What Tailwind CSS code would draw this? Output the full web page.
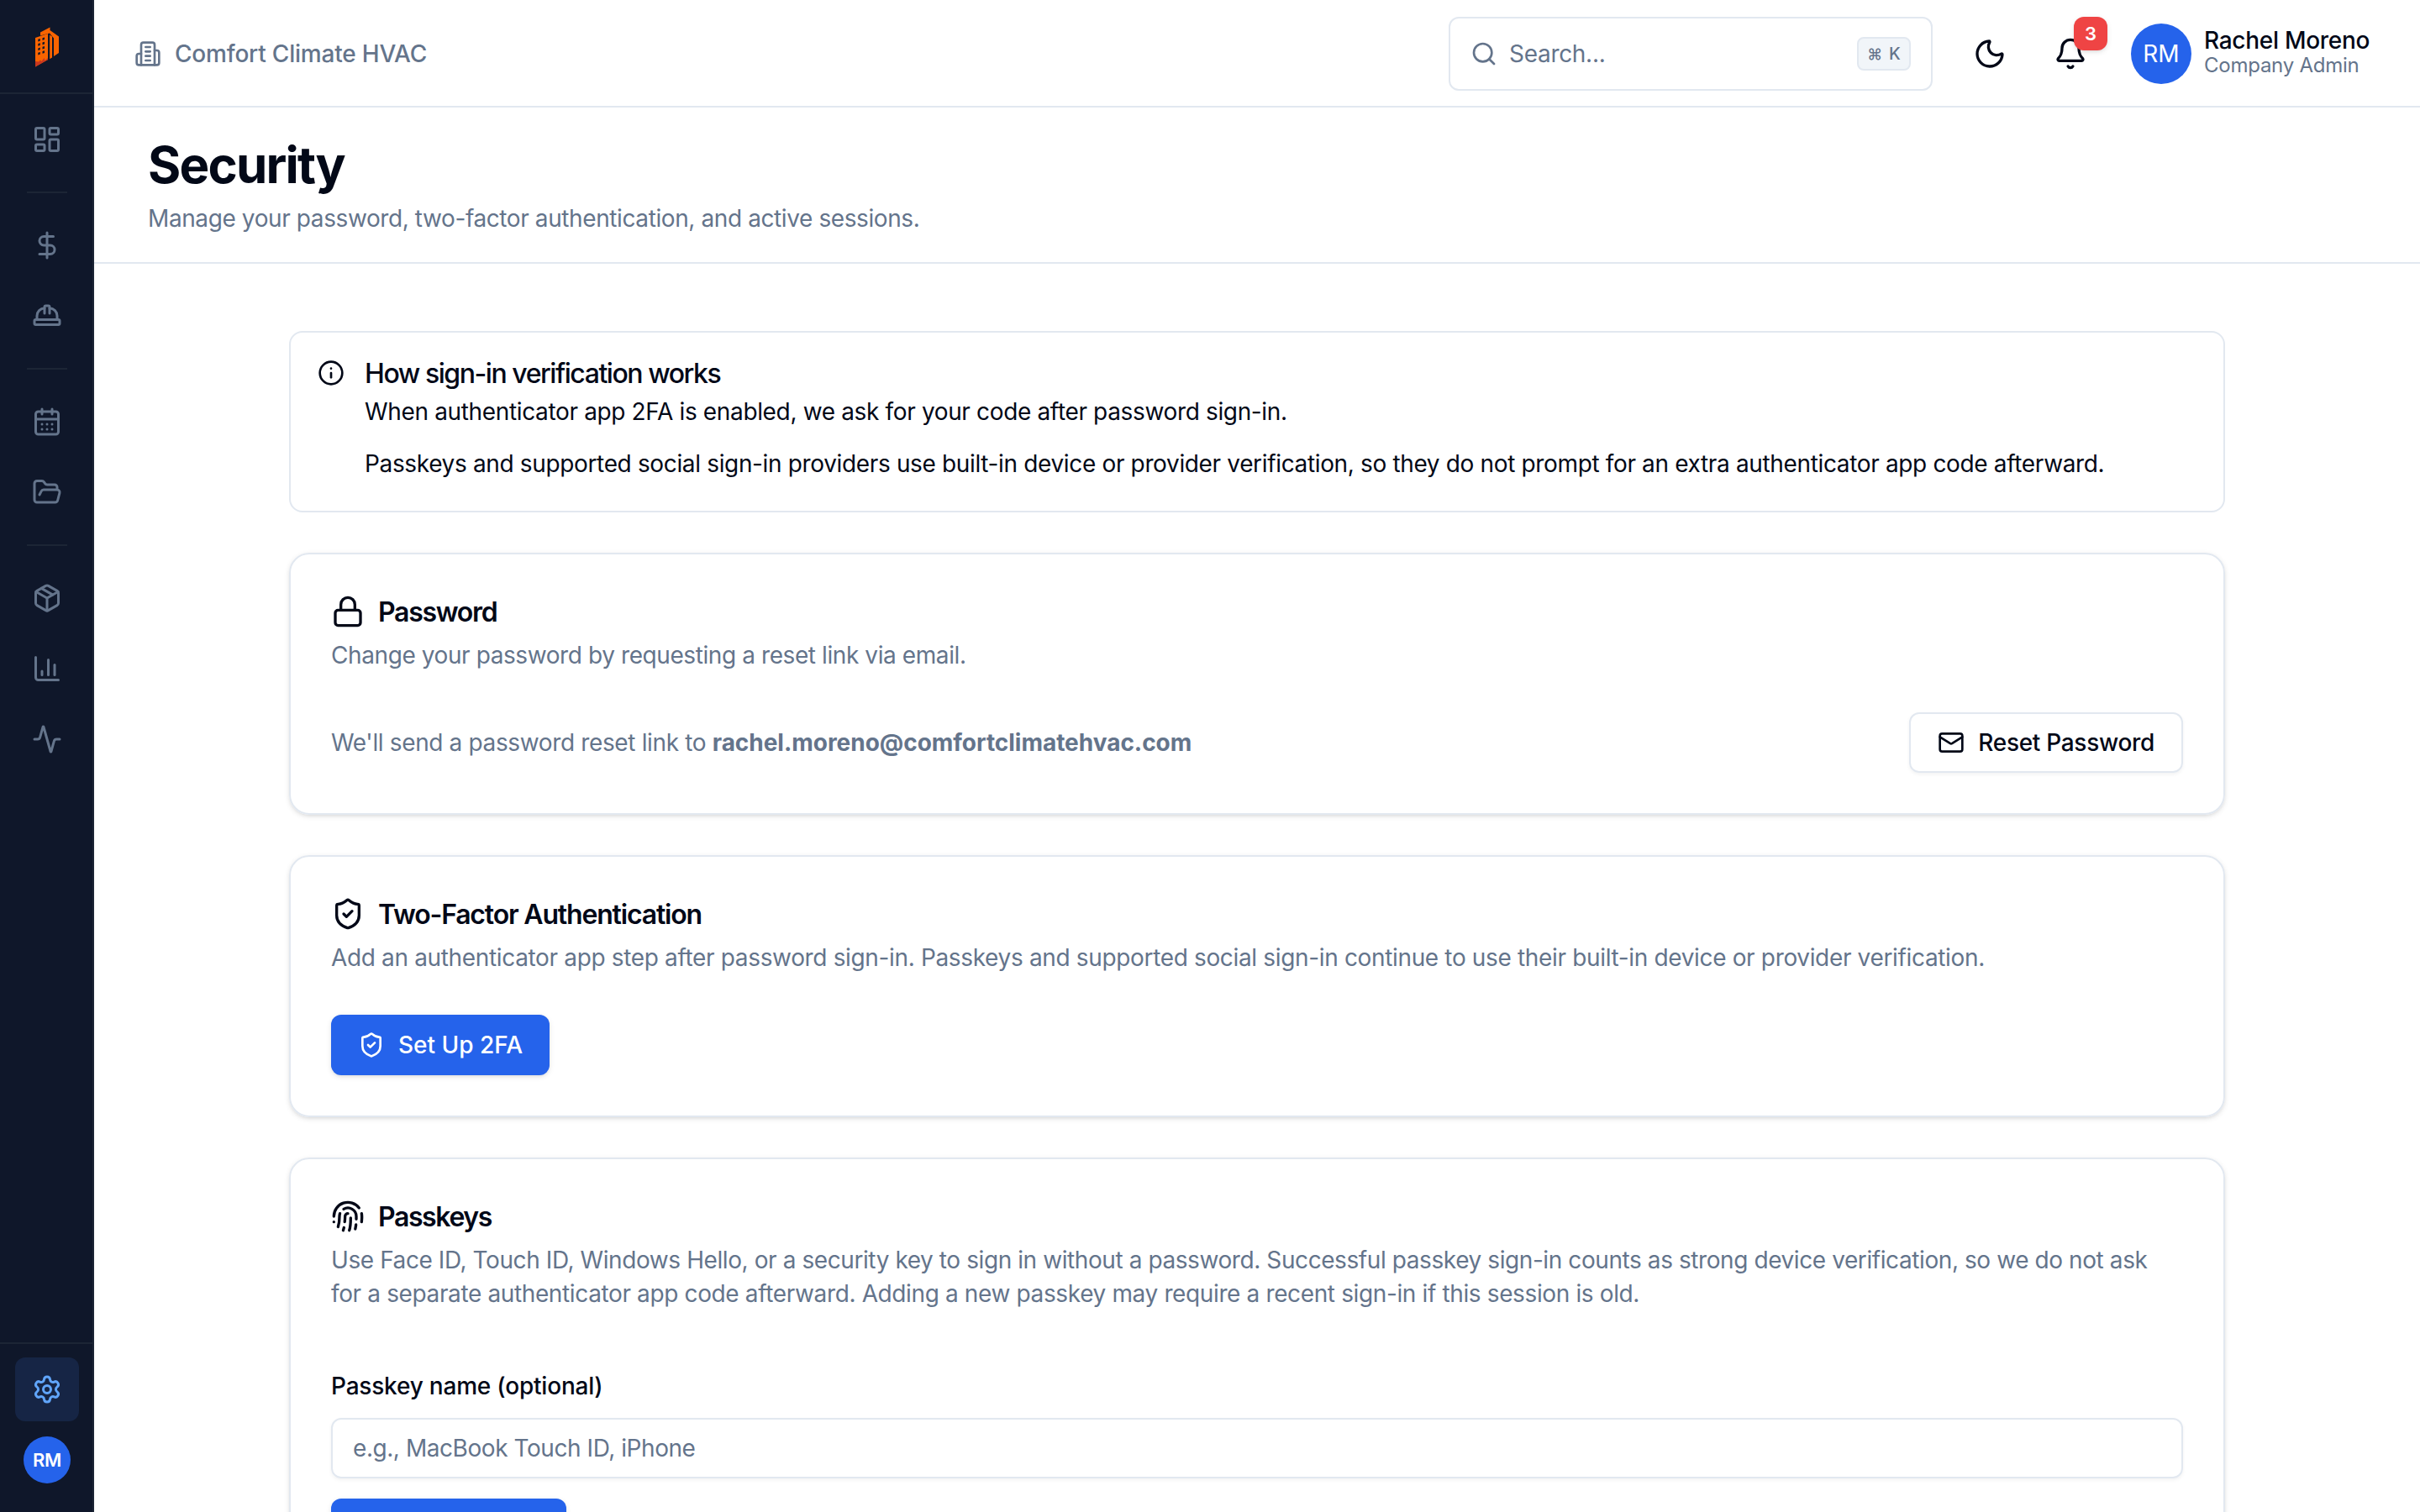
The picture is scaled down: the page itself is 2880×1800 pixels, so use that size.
<!DOCTYPE html>
<html lang="en" class="text-[32px]">
<head>
  <meta charset="UTF-8" />
  <meta name="viewport" content="width=device-width, initial-scale=1.0"/>
  <title>Security - Comfort Climate HVAC</title>
  <script src="https://cdn.jsdelivr.net/npm/@tailwindcss/browser@4"></script>
</head>
<body class="flex h-screen overflow-hidden bg-white font-['Inter',sans-serif] text-[#020817]">

  <!-- Sidebar -->
  <aside class="flex w-14 shrink-0 flex-col border-r-2 border-[#1c2535] bg-[#0f172a] text-[#64748b]">
    <div class="flex h-14 items-center justify-center border-b-2 border-[#1c2535] pt-[2px] pl-[2px]">
      <svg class="h-[48px] w-[28px]" viewBox="0 0 28 48">
        <path fill="#f96400" d="M6 6.500 17.500.5V4L28 11.500V31l-6 4V13.500L17 7.500 6 10.500Z"/>
        <path fill="#f96400" d="M0 13 15 8v31L0 47.500Z"/>
        <path fill="#f96400" d="M17.200 9.500l2.800 2V36.500l-2.800 1.800Z"/>
        <path fill="#c8371f" d="M0 41l4 .5 2-2 1.500 1.500 3-4 1 3 3.500-3v2L0 47.500Z"/>
        <path fill="#0f172a" d="M3.300 14.800l2.500-.8v2.700l-2.500.8Zm5.200-1.600 2.500-.8v2.700l-2.500.8ZM3.300 20.100l2.500-.8v2.700l-2.500.8Zm5.200-1.600 2.500-.8v2.700l-2.500.8ZM3.300 25.400l2.500-.8v2.700l-2.500.8Zm5.200-1.600 2.500-.8v2.700l-2.500.8ZM3.300 30.700l2.500-.8v2.700l-2.500.8Zm5.200-1.600 2.500-.8v2.700l-2.500.8Z"/>
      </svg>
    </div>

    <nav class="flex flex-1 flex-col items-center pt-2 pl-[2px]">
      <a class="flex size-9.5 items-center justify-center">
        <svg class="size-4.5" viewBox="0 0 24 24" fill="none" stroke="currentColor" stroke-width="2" stroke-linecap="round" stroke-linejoin="round"><rect width="7" height="9" x="3" y="3" rx="1"/><rect width="7" height="5" x="14" y="3" rx="1"/><rect width="7" height="9" x="14" y="12" rx="1"/><rect width="7" height="5" x="3" y="16" rx="1"/></svg>
      </a>
      <div class="my-3 h-[2px] w-6 bg-[#1c2535]"></div>
      <div class="flex flex-col gap-1">
        <a class="flex size-9.5 items-center justify-center">
          <svg class="size-4.5" viewBox="0 0 24 24" fill="none" stroke="currentColor" stroke-width="2" stroke-linecap="round" stroke-linejoin="round"><path d="M12 2v20"/><path d="M17 5H9.500a3.500 3.500 0 0 0 0 7h5a3.500 3.500 0 0 1 0 7H6"/></svg>
        </a>
        <a class="flex size-9.5 items-center justify-center">
          <svg class="size-4.5" viewBox="0 0 24 24" fill="none" stroke="currentColor" stroke-width="2" stroke-linecap="round" stroke-linejoin="round"><path d="M10 10V5a1 1 0 0 1 1-1h2a1 1 0 0 1 1 1v5"/><path d="M14 6a6 6 0 0 1 6 6v3"/><path d="M4 15v-3a6 6 0 0 1 6-6"/><rect x="2" y="15" width="20" height="4" rx="1"/></svg>
        </a>
      </div>
      <div class="my-3 h-[2px] w-6 bg-[#1c2535]"></div>
      <div class="flex flex-col gap-1">
        <a class="flex size-9.5 items-center justify-center">
          <svg class="size-4.5" viewBox="0 0 24 24" fill="none" stroke="currentColor" stroke-width="2" stroke-linecap="round" stroke-linejoin="round"><path d="M8 2v4"/><path d="M16 2v4"/><rect width="18" height="18" x="3" y="4" rx="2"/><path d="M3 10h18"/><path d="M8 14h.01"/><path d="M12 14h.01"/><path d="M16 14h.01"/><path d="M8 18h.01"/><path d="M12 18h.01"/><path d="M16 18h.01"/></svg>
        </a>
        <a class="flex size-9.5 items-center justify-center">
          <svg class="size-4.5" viewBox="0 0 24 24" fill="none" stroke="currentColor" stroke-width="2" stroke-linecap="round" stroke-linejoin="round"><path d="m6 14 1.500-2.900A2 2 0 0 1 9.240 10H20a2 2 0 0 1 1.940 2.500l-1.540 6a2 2 0 0 1-1.950 1.500H4a2 2 0 0 1-2-2V5a2 2 0 0 1 2-2h3.900a2 2 0 0 1 1.690.9l.81 1.200a2 2 0 0 0 1.670.9H18a2 2 0 0 1 2 2v2"/></svg>
        </a>
      </div>
      <div class="my-3 h-[2px] w-6 bg-[#1c2535]"></div>
      <div class="flex flex-col gap-1">
        <a class="flex size-9.5 items-center justify-center">
          <svg class="size-4.5" viewBox="0 0 24 24" fill="none" stroke="currentColor" stroke-width="2" stroke-linecap="round" stroke-linejoin="round"><path d="M11 21.730a2 2 0 0 0 2 0l7-4A2 2 0 0 0 21 16V8a2 2 0 0 0-1-1.730l-7-4a2 2 0 0 0-2 0l-7 4A2 2 0 0 0 3 8v8a2 2 0 0 0 1 1.730z"/><path d="M12 22V12"/><path d="M3.290 7 12 12l8.710-5"/><path d="m7.500 4.270 9 5.150"/></svg>
        </a>
        <a class="flex size-9.5 items-center justify-center">
          <svg class="size-4.5" viewBox="0 0 24 24" fill="none" stroke="currentColor" stroke-width="2" stroke-linecap="round" stroke-linejoin="round"><path d="M3 3v16a2 2 0 0 0 2 2h16"/><path d="M18 17V9"/><path d="M13 17V5"/><path d="M8 17v-3"/></svg>
        </a>
        <a class="flex size-9.5 items-center justify-center">
          <svg class="size-4.5" viewBox="0 0 24 24" fill="none" stroke="currentColor" stroke-width="2" stroke-linecap="round" stroke-linejoin="round"><path d="M22 12h-2.480a2 2 0 0 0-1.930 1.460l-2.350 8.360a.25.25 0 0 1-.48 0L9.240 2.180a.25.25 0 0 0-.48 0l-2.350 8.360A2 2 0 0 1 4.490 12H2"/></svg>
        </a>
      </div>
    </nav>

    <div class="flex flex-col items-center gap-1 border-t-2 border-[#1c2535] pt-2 pb-3 pl-[2px]">
      <a class="flex size-9.5 items-center justify-center rounded-md bg-[#162545] text-[#60a5fa]">
        <svg class="size-4.5" viewBox="0 0 24 24" fill="none" stroke="currentColor" stroke-width="2" stroke-linecap="round" stroke-linejoin="round"><path d="M9.671 4.136a2.340 2.340 0 0 1 4.659 0 2.340 2.340 0 0 0 3.319 1.915 2.340 2.340 0 0 1 2.330 4.033 2.340 2.340 0 0 0 0 3.831 2.340 2.340 0 0 1-2.330 4.033 2.340 2.340 0 0 0-3.319 1.915 2.340 2.340 0 0 1-4.659 0 2.340 2.340 0 0 0-3.320-1.915 2.340 2.340 0 0 1-2.330-4.033 2.340 2.340 0 0 0 0-3.831A2.340 2.340 0 0 1 6.350 6.051a2.340 2.340 0 0 0 3.319-1.915"/><circle cx="12" cy="12" r="3"/></svg>
      </a>
      <div class="flex size-9.5 items-center justify-center">
        <div class="flex size-7 items-center justify-center rounded-full bg-[#2563eb] text-[22px] leading-none font-semibold tracking-[-0.3px] text-white">RM</div>
      </div>
    </div>
  </aside>

  <div class="flex min-w-0 flex-1 flex-col">

    <!-- Top bar -->
    <header class="flex h-16 shrink-0 items-center border-b-2 border-[#e2e8f0] px-6 pt-[2px]">
      <div class="flex items-center gap-2 text-[#64748b]">
        <svg class="size-4" viewBox="0 0 24 24" fill="none" stroke="currentColor" stroke-width="2" stroke-linecap="round" stroke-linejoin="round"><path d="M6 22V4a2 2 0 0 1 2-2h8a2 2 0 0 1 2 2v18Z"/><path d="M6 12H4a2 2 0 0 0-2 2v6a2 2 0 0 0 2 2h2"/><path d="M18 9h2a2 2 0 0 1 2 2v9a2 2 0 0 1-2 2h-2"/><path d="M10 6h4"/><path d="M10 10h4"/><path d="M10 14h4"/><path d="M10 18h4"/></svg>
        <span class="text-sm font-medium tracking-[-0.2px]">Comfort Climate HVAC</span>
      </div>

      <div class="ml-auto flex h-11 w-72 items-center gap-[14px] rounded-md border-2 border-[#e2e8f0] px-3 text-[#64748b]">
        <svg class="size-4" viewBox="0 0 24 24" fill="none" stroke="currentColor" stroke-width="2" stroke-linecap="round" stroke-linejoin="round"><path d="m21 21-4.340-4.340"/><circle cx="11" cy="11" r="8"/></svg>
        <span class="text-sm tracking-[-0.3px]">Search...</span>
        <kbd class="ml-auto flex h-5 w-8 items-center justify-center gap-1 rounded-[8px] border-2 border-[#e2e8f0] bg-[#f1f5f9] font-['Inter',sans-serif] text-[20px] font-medium"><span class="text-[18px]">⌘</span>K</kbd>
      </div>

      <button class="ml-4 flex size-9 items-center justify-center">
        <svg class="size-5" viewBox="0 0 24 24" fill="none" stroke="currentColor" stroke-width="2" stroke-linecap="round" stroke-linejoin="round"><path d="M20.985 12.486a9 9 0 1 1-9.473-9.472c.405-.022.617.46.402.803a6 6 0 0 0 8.268 8.268c.344-.215.825-.004.803.401"/></svg>
      </button>
      <button class="relative ml-3 flex size-9 items-center justify-center">
        <svg class="size-5" viewBox="0 0 24 24" fill="none" stroke="currentColor" stroke-width="2" stroke-linecap="round" stroke-linejoin="round"><path d="M10.268 21a2 2 0 0 0 3.464 0"/><path d="M3.262 15.326A1 1 0 0 0 4 17h16a1 1 0 0 0 .74-1.673C19.410 13.956 18 12.499 18 8A6 6 0 0 0 6 8c0 4.499-1.411 5.956-2.738 7.326"/></svg>
        <span class="absolute -top-1 -right-1 flex size-5 items-center justify-center rounded-md bg-[#ef4444] text-[22px] leading-none font-semibold text-white shadow-[0_2px_6px_rgb(0_0_0/0.1),0_2px_4px_-2px_rgb(0_0_0/0.1)]">3</span>
      </button>
      <div class="ml-3.5 flex items-center gap-[15px] px-1">
        <div class="flex size-9 items-center justify-center rounded-full bg-[#2563eb] text-sm text-white">RM</div>
        <div class="flex w-[201px] flex-col gap-0.5 pb-[4px] whitespace-nowrap">
          <span class="text-sm leading-none font-medium tracking-[-0.28px]">Rachel Moreno</span>
          <span class="text-xs leading-none tracking-[-0.25px] text-[#64748b]">Company Admin</span>
        </div>
      </div>
    </header>

    <!-- Page title -->
    <div class="border-b-2 border-[#e2e8f0] px-8 py-4">
      <h1 class="text-3xl font-bold tracking-[-1.8px]">Security</h1>
      <p class="mt-1 text-sm tracking-[-0.4px] text-[#64748b]">Manage your password, two-factor authentication, and active sessions.</p>
    </div>

    <main class="min-h-0 flex-1 overflow-hidden pt-10">
      <div class="mx-auto flex w-full max-w-6xl flex-col gap-6">

        <!-- Info alert -->
        <div class="flex h-[216px] gap-3 rounded-lg border-2 border-[#e2e8f0] p-4">
          <svg class="size-4 shrink-0" viewBox="0 0 24 24" fill="none" stroke="currentColor" stroke-width="2" stroke-linecap="round" stroke-linejoin="round"><circle cx="12" cy="12" r="10"/><path d="M12 16v-4"/><path d="M12 8h.01"/></svg>
          <div>
            <h5 class="mb-[7px] pt-[1px] text-base leading-none font-medium tracking-[-1.45px]">How sign-in verification works</h5>
            <div class="space-y-2 text-sm leading-relaxed tracking-[-0.35px]">
              <p>When authenticator app 2FA is enabled, we ask for your code after password sign-in.</p>
              <p>Passkeys and supported social sign-in providers use built-in device or provider verification, so they do not prompt for an extra authenticator app code afterward.</p>
            </div>
          </div>
        </div>

        <!-- Password -->
        <section class="rounded-xl border-2 border-[#e2e8f0] p-6 shadow-[0_2px_6px_rgb(0_0_0/0.1),0_2px_4px_-2px_rgb(0_0_0/0.1)]">
          <h2 class="flex h-5 items-center gap-2 text-base font-semibold tracking-[-1.3px]">
            <svg class="size-5" viewBox="0 0 24 24" fill="none" stroke="currentColor" stroke-width="2" stroke-linecap="round" stroke-linejoin="round"><rect width="18" height="11" x="3" y="11" rx="2" ry="2"/><path d="M7 11V7a5 5 0 0 1 10 0v4"/></svg>
            <span class="pt-[2px]">Password</span>
          </h2>
          <p class="mt-1.5 text-sm tracking-[-0.41px] text-[#64748b]">Change your password by requesting a reset link via email.</p>
          <div class="mt-6 flex items-center justify-between">
            <p class="text-sm tracking-[-0.36px] text-[#64748b]">We'll send a password reset link to <strong class="font-bold tracking-[-0.03px]">rachel.moreno@comfortclimatehvac.com</strong></p>
            <button class="flex h-9 items-center gap-2 rounded-md border-2 border-[#e2e8f0] px-4 text-sm font-medium tracking-[-0.3px] shadow-[0_2px_4px_rgb(0_0_0/0.05)]">
              <svg class="size-4" viewBox="0 0 24 24" fill="none" stroke="currentColor" stroke-width="2" stroke-linecap="round" stroke-linejoin="round"><path d="m22 7-8.991 5.727a2 2 0 0 1-2.009 0L2 7"/><rect x="2" y="4" width="20" height="16" rx="2"/></svg>
              Reset Password
            </button>
          </div>
        </section>

        <!-- Two-factor -->
        <section class="rounded-xl border-2 border-[#e2e8f0] p-6 shadow-[0_2px_6px_rgb(0_0_0/0.1),0_2px_4px_-2px_rgb(0_0_0/0.1)]">
          <h2 class="flex h-5 items-center gap-2 text-base font-semibold tracking-[-1.18px]">
            <svg class="size-5" viewBox="0 0 24 24" fill="none" stroke="currentColor" stroke-width="2" stroke-linecap="round" stroke-linejoin="round"><path d="M20 13c0 5-3.500 7.500-7.660 8.950a1 1 0 0 1-.67-.01C7.500 20.500 4 18 4 13V6a1 1 0 0 1 1-1c2 0 4.500-1.200 6.240-2.720a1.170 1.170 0 0 1 1.520 0C14.510 3.810 17 5 19 5a1 1 0 0 1 1 1z"/><path d="m9 12 2 2 4-4"/></svg>
            <span class="pt-[2px]">Two-Factor Authentication</span>
          </h2>
          <p class="mt-1.5 text-sm tracking-[-0.345px] text-[#64748b]">Add an authenticator app step after password sign-in. Passkeys and supported social sign-in continue to use their built-in device or provider verification.</p>
          <button class="mt-6 flex h-9 items-center gap-2 rounded-md bg-[#2563eb] px-4 text-sm font-medium text-white shadow-[0_2px_6px_rgb(0_0_0/0.1),0_2px_4px_-2px_rgb(0_0_0/0.1)]">
            <svg class="size-4" viewBox="0 0 24 24" fill="none" stroke="currentColor" stroke-width="2" stroke-linecap="round" stroke-linejoin="round"><path d="M20 13c0 5-3.500 7.500-7.660 8.950a1 1 0 0 1-.67-.01C7.500 20.500 4 18 4 13V6a1 1 0 0 1 1-1c2 0 4.500-1.200 6.240-2.720a1.170 1.170 0 0 1 1.520 0C14.510 3.810 17 5 19 5a1 1 0 0 1 1 1z"/><path d="m9 12 2 2 4-4"/></svg>
            Set Up 2FA
          </button>
        </section>

        <!-- Passkeys -->
        <section class="h-96 rounded-xl border-2 border-[#e2e8f0] p-6 shadow-[0_2px_6px_rgb(0_0_0/0.1),0_2px_4px_-2px_rgb(0_0_0/0.1)]">
          <h2 class="flex h-5 items-center gap-2 text-base font-semibold tracking-[-1.4px]">
            <svg class="size-5" viewBox="0 0 24 24" fill="none" stroke="currentColor" stroke-width="2" stroke-linecap="round" stroke-linejoin="round"><path d="M12 10a2 2 0 0 0-2 2c0 1.020-.1 2.510-.26 4"/><path d="M14 13.120c0 2.380 0 6.380-1 8.880"/><path d="M17.290 21.020c.12-.6.430-2.300.5-3.020"/><path d="M2 12a10 10 0 0 1 18-6"/><path d="M2 16h.01"/><path d="M21.800 16c.2-2 .131-5.354 0-6"/><path d="M5 19.500C5.500 18 6 15 6 12a6 6 0 0 1 .34-2"/><path d="M8.650 22c.21-.66.450-1.320.570-2"/><path d="M9 6.800a6 6 0 0 1 9 5.200v2"/></svg>
            <span class="pt-[2px]">Passkeys</span>
          </h2>
          <p class="mt-1.5 text-sm tracking-[-0.37px] text-[#64748b]"><span class="tracking-[-0.415px]">Use Face ID, Touch ID, Windows Hello, or a security key to sign in without a password. Successful passkey sign-in counts as strong device verification, so we do not ask</span> for a separate authenticator app code afterward. Adding a new passkey may require a recent sign-in if this session is old.</p>
          <div class="mt-9.5 flex flex-col items-start gap-3">
            <label for="passkey_name" class="text-sm leading-none font-medium tracking-[-0.2px]">Passkey name (optional)</label>
            <input id="passkey_name" type="text" placeholder="e.g., MacBook Touch ID, iPhone"
                   class="h-9 w-full rounded-md border-2 border-[#e2e8f0] px-3 text-sm tracking-[-0.44px] shadow-[0_2px_4px_rgb(0_0_0/0.05)] placeholder:text-[#64748b]" />
            <button aria-label="Add passkey" class="h-9 w-35 rounded-md bg-[#2563eb] shadow-[0_2px_6px_rgb(0_0_0/0.1)]"></button>
          </div>
        </section>

      </div>
    </main>
  </div>
</body>
</html>
